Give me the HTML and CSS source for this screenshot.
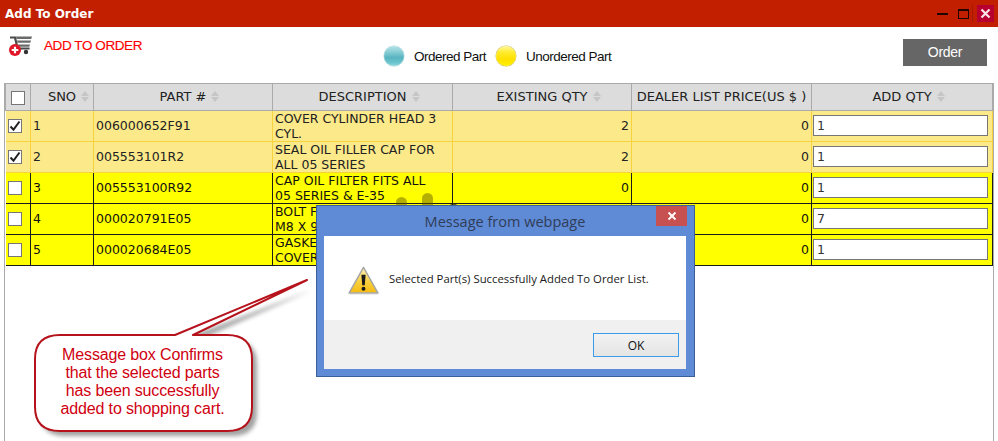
FILE: index.html
```html
<!DOCTYPE html>
<html lang="en">
<head>
<meta charset="utf-8">
<title>Add To Order</title>
<link rel="stylesheet" href="styles.css">
</head>
<body>
<header class="titlebar">
  <h1 class="title">Add To Order</h1>
  <div class="winctl">
    <span class="win-min"></span>
    <span class="win-max"></span>
    <span class="win-sep"></span>
    <span class="win-close"><svg width="17" height="17" viewBox="0 0 17 17"><path d="M4.500 4.500l8 8M12.500 4.500l-8 8" stroke="#fbe6ea" stroke-width="2.200" fill="none"/></svg></span>
  </div>
</header>
<section class="toolbar">
  <div class="heading">
    <svg class="cart" width="24" height="22" viewBox="0 0 24 22">
      <path d="M1 2.500h5l2.600 11h12" fill="none" stroke="#4a4a4a" stroke-width="2.200"/>
      <path d="M7 1.500h16l-.8 2.400H7.400zM8 5.600h14l-.7 2.200H8.500zM9 9.500h12l-.7 2.200H9.500z" fill="#6a6a6a"/>
      <circle cx="17" cy="17" r="2.200" fill="#333"/>
      <circle cx="6" cy="15" r="6" fill="#e01526"/>
      <path d="M2.700 15h6.600M6 11.700v6.600" stroke="#fff" stroke-width="2.200"/>
    </svg>
    <span class="heading-text">ADD TO ORDER</span>
  </div>
  <div class="legend">
    <span class="ball ball-teal"></span><span class="legend-text">Ordered Part</span>
    <span class="ball ball-yellow"></span><span class="legend-text">Unordered Part</span>
  </div>
  <button class="order-btn" type="button">Order</button>
</section>
<main class="panel">
  <table class="grid">
    <colgroup>
      <col class="c-check"><col class="c-sno"><col class="c-part"><col class="c-desc"><col class="c-qty"><col class="c-price"><col class="c-add">
    </colgroup>
    <thead>
      <tr>
        <th class="th-check"><span class="box"></span></th>
        <th>SNO<span class="sort"></span></th>
        <th>PART #<span class="sort"></span></th>
        <th>DESCRIPTION<span class="sort"></span></th>
        <th>EXISTING QTY<span class="sort"></span></th>
        <th>DEALER LIST PRICE(US $ )</th>
        <th>ADD QTY<span class="sort"></span></th>
      </tr>
    </thead>
    <tbody>
      <tr class="ordered">
        <td class="td-check"><span class="box"><svg width="12" height="12" viewBox="0 0 12 12"><path d="M1.500 6.500l3 3.200L10.500 1.500" fill="none" stroke="#222" stroke-width="2"/></svg></span></td>
        <td>1</td><td>006000652F91</td><td>COVER CYLINDER HEAD 3 CYL.</td><td class="num">2</td><td class="num">0</td>
        <td class="td-input"><input class="qty" type="text" value="1"></td>
      </tr>
      <tr class="ordered">
        <td class="td-check"><span class="box"><svg width="12" height="12" viewBox="0 0 12 12"><path d="M1.500 6.500l3 3.200L10.500 1.500" fill="none" stroke="#222" stroke-width="2"/></svg></span></td>
        <td>2</td><td>005553101R2</td><td>SEAL OIL FILLER CAP FOR ALL 05 SERIES</td><td class="num">2</td><td class="num">0</td>
        <td class="td-input"><input class="qty" type="text" value="1"></td>
      </tr>
      <tr class="unordered">
        <td class="td-check"><span class="box"></span></td>
        <td>3</td><td>005553100R92</td><td>CAP OIL FILTER FITS ALL<br>05 SERIES &amp; E-35</td><td class="num">0</td><td class="num">0</td>
        <td class="td-input"><input class="qty" type="text" value="1"></td>
      </tr>
      <tr class="unordered">
        <td class="td-check"><span class="box"></span></td>
        <td>4</td><td>000020791E05</td><td>BOLT FLANGE HEAD<br>M8 X 90</td><td class="num">0</td><td class="num">0</td>
        <td class="td-input"><input class="qty" type="text" value="7"></td>
      </tr>
      <tr class="unordered">
        <td class="td-check"><span class="box"></span></td>
        <td>5</td><td>000020684E05</td><td>GASKET CYLINDER<br>COVER</td><td class="num">0</td><td class="num">0</td>
        <td class="td-input"><input class="qty" type="text" value="1"></td>
      </tr>
    </tbody>
  </table>
</main>

<div class="spinner">
  <span class="blob blob-a"></span><span class="blob blob-b"></span><span class="blob blob-c"></span>
</div>

<div class="callout">
  <svg class="callout-shape" width="330" height="170" viewBox="0 0 330 170">
    <defs>
      <filter id="soft" x="-10%" y="-10%" width="125%" height="125%"><feGaussianBlur stdDeviation="2"/></filter>
    </defs>
    <path class="bubble-shadow" d="M56 56H171L303 6 190 56H223Q248 56 248 80V128Q248 152 223 152H56Q31 152 31 128V80Q31 56 56 56Z" transform="translate(5 5)" filter="url(#soft)"/>
    <path class="bubble" d="M56 56H171L303 1 189 56H223Q248 56 248 80V128Q248 152 223 152H56Q31 152 31 128V80Q31 56 56 56Z"/>
  </svg>
  <p class="callout-text">Message box Confirms<br>that the selected parts<br>has been successfully<br>added to shopping cart.</p>
</div>

<div class="dialog" role="alertdialog">
  <div class="dialog-head">
    <span class="dialog-title">Message from webpage</span>
    <span class="dialog-close"><svg width="10" height="10" viewBox="0 0 10 10"><path d="M1.500 1.500l7 7M8.500 1.500l-7 7" stroke="#fff" stroke-width="1.800" fill="none"/></svg></span>
  </div>
  <div class="dialog-body">
    <div class="dialog-msg">
      <svg class="warn" width="31" height="29" viewBox="0 0 32 30">
        <defs>
          <linearGradient id="warnfill" x1="0" y1="0" x2="0" y2="1"><stop offset="0" stop-color="#fdf0b8"/><stop offset=".55" stop-color="#f9d040"/><stop offset="1" stop-color="#f5bb10"/></linearGradient>
        </defs>
        <path d="M16 1.500L31 28H1z" fill="url(#warnfill)" stroke="#a5a5a5" stroke-width="1.500" stroke-linejoin="round"/>
        <path d="M1.500 28.500h29" stroke="#bdbdbd" stroke-width="1.500"/>
        <path d="M13.800 9h4.400l-.9 11h-2.600z" fill="#1a1a1a"/>
        <circle cx="16" cy="23.500" r="2" fill="#1a1a1a"/>
      </svg>
      <span class="msg-text">Selected Part(s) Successfully Added To Order List.</span>
    </div>
    <div class="dialog-foot"><button class="ok-btn" type="button">OK</button></div>
  </div>
</div>
</body>
</html>
```
FILE: styles.css
```css
* { box-sizing: border-box; }
html, body { margin: 0; height: 441px; overflow: hidden; background: #fff; }
body { display: flex; flex-direction: column; font-family: "DejaVu Sans", sans-serif; font-size: 12px; color: #222; position: relative; }

.titlebar { flex: none; height: 27px; background: #c21f00; display: flex; align-items: center; justify-content: space-between; padding: 0 4px 0 5px; }
.title { margin: 0; font-size: 12px; font-weight: bold; color: #fff; }
.winctl { display: flex; align-items: center; height: 17px; }
.win-min { width: 11px; height: 2px; background: #1e0500; margin-right: 10px; }
.win-max { width: 11px; height: 10px; border: 1px solid #1e0500; border-top-width: 2px; margin-right: 3px; }
.win-sep { width: 1px; height: 17px; background: #a81a00; margin-right: 4px; }
.win-close { width: 17px; height: 17px; background: #b7002f; display: block; }
.win-close svg { display: block; }

.toolbar { flex: none; height: 56px; display: flex; position: relative; padding: 0 11px 0 9px; }
.heading { width: 375px; display: flex; align-items: flex-start; padding-top: 8px; }
.cart { display: block; flex: none; }
.heading-text { font-family: "Liberation Sans", sans-serif; font-size: 13.5px; color: #f00; margin: 3px 0 0 11px; letter-spacing: -.42px; -webkit-text-stroke: .15px #f00; }
.legend { display: flex; align-items: center; height: 20px; margin-top: 19px; font-family: "Liberation Sans", sans-serif; font-size: 13.5px; color: #111; letter-spacing: -.5px; }
.legend-text { margin-left: 10px; margin-right: 10px; }
.ball { display: block; width: 20px; height: 20px; border-radius: 50%; }
.ball-teal { background: linear-gradient(#b5e2e6 0, #8fd2d8 25%, #58b4c0 58%, #6cc6cf 85%, #8fd8dc 100%); box-shadow: 0 0 0 .5px #a8d5da; }
.ball-yellow { background: linear-gradient(#fff6a0 0, #ffec30 30%, #ffe000 65%, #fff000 100%); box-shadow: 0 0 0 .5px #c9b94a; }
.order-btn { margin: 12px 0 0 auto; width: 84px; height: 27px; border: 0; background: #666; color: #fff; font-family: "Liberation Sans", sans-serif; font-size: 14px; letter-spacing: -.3px; padding: 0 0 2px; }

.panel { flex: 1; margin: 0 4px 0 4px; border: 1px solid #aaa; border-bottom: 0; min-height: 0; }
.grid { width: 987px; table-layout: fixed; border-collapse: collapse; }
.c-check { width: 25px; } .c-sno { width: 63px; } .c-part { width: 179px; } .c-desc { width: 180px; } .c-qty { width: 179px; } .c-price { width: 180px; } .c-add { width: 181px; }
.grid th { height: 26px; background: #dcdcdc; border: 1px solid #aaa; border-top: 0; font-weight: normal; font-size: 13px; color: #222; padding: 0; text-align: center; white-space: nowrap; }
.grid .th-check .box { margin: 3px 0 0 5px; }
.sort { display: inline-block; position: relative; width: 9px; height: 11px; margin: 0 -14px 0 5px; vertical-align: -1px; }
.sort::before, .sort::after { content: ""; position: absolute; left: 0; border-left: 4.5px solid transparent; border-right: 4.5px solid transparent; }
.sort::before { top: 0; border-bottom: 5px solid #c6c6c6; }
.sort::after { bottom: 0; border-top: 5px solid #c6c6c6; }

.grid td { height: 31px; padding: 0 2px; line-height: 15px; vertical-align: middle; font-size: 12.5px; color: #222; overflow: hidden; }
.grid .ordered td { background: #fbe98a; border: 1px solid #f8d23c; }
.grid .unordered td { background: #ff0; border: 1px solid #1c1c1c; color: #111; }
.grid .ordered td:first-child, .grid .unordered td:first-child { border-left: 0; }
.grid .num { text-align: right; }
.grid .td-check { padding: 0; }
.box { display: flex; align-items: center; justify-content: center; width: 14px; height: 14px; background: #fff; border: 1px solid #767676; margin: 0 0 0 2px; }
.box svg { display: block; }
.grid .td-input { padding: 0; }
.qty { display: block; width: 175px; height: 21px; margin-left: 1px; border: 1px solid #767676; padding: 0 3px; background: #fff; font-family: "DejaVu Sans", sans-serif; font-size: 12.5px; color: #333; outline: 0; border-radius: 0; }

.spinner { position: absolute; left: 385px; top: 185px; width: 80px; height: 24px; }
.blob { position: absolute; background: rgba(90,80,0,.45); border-radius: 6px 6px 0 0; filter: blur(.6px); }
.blob-a { left: 11px; top: 12px; width: 11px; height: 9px; }
.blob-b { left: 37px; top: 8px; width: 11px; height: 13px; }
.blob-c { left: 65px; top: 18px; width: 7px; height: 4px; background: rgba(40,40,0,.7); }

.callout { position: absolute; left: 4px; top: 279px; width: 330px; height: 162px; }
.callout-shape { display: block; overflow: visible; }
.bubble { fill: #fff; stroke: #b5121b; stroke-width: 2; stroke-linejoin: round; }
.bubble-shadow { fill: #555; opacity: .55; }
.callout-text { position: absolute; left: 30px; top: 67px; width: 217px; margin: 0; text-align: center; font-family: "Liberation Sans", sans-serif; font-size: 16px; letter-spacing: -.14px; line-height: 18px; color: #d00010; }

.dialog { position: absolute; left: 316px; top: 205px; width: 379px; height: 172px; background: #5f8ad6; border: 1px solid #3d5f99; padding: 0 8px 7px 7px; display: flex; flex-direction: column; }
.dialog-head { flex: none; height: 30px; position: relative; display: flex; align-items: center; justify-content: center; }
.dialog-title { font-family: "Open Sans", sans-serif; font-size: 14.5px; color: #2f3d58; margin-top: 1px; }
.dialog-close { position: absolute; right: -1px; top: 0; width: 31px; height: 20px; background: #c75050; display: flex; align-items: center; justify-content: center; }
.dialog-close svg { display: block; }
.dialog-body { flex: 1; display: flex; flex-direction: column; background: #fff; }
.dialog-msg { flex: 1; display: flex; align-items: center; padding: 0 0 0 24px; }
.warn { flex: none; display: block; margin-top: 4px; }
.msg-text { margin-left: 10px; font-family: "Open Sans", sans-serif; font-size: 11.35px; color: #1a1a1a; white-space: nowrap; }
.dialog-foot { flex: none; height: 49px; background: #f0f0f0; display: flex; justify-content: flex-end; padding: 13px 7px 0 0; }
.ok-btn { display: block; width: 86px; height: 24px; border: 1px solid #3c9be8; background: linear-gradient(#f2f2f2, #e4e4e4); font-family: "Open Sans", sans-serif; font-size: 12px; color: #111; padding: 0; }
```
